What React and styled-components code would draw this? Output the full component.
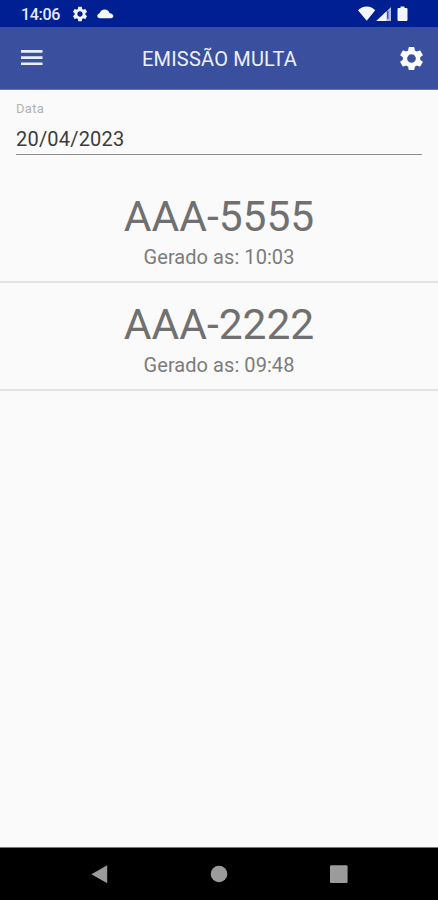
import React from 'react';
import styled, { createGlobalStyle } from 'styled-components';
import { MdSettings } from 'react-icons/md';

const GlobalStyle = createGlobalStyle`
    * {
        box-sizing: border-box;
    }

    body {
        margin: 0;
        background: #fafafa;
        font-family: Roboto, sans-serif;
    }
`

const ContainerTela = styled.div`
    display: flex;
    flex-direction: column;
    width: 438px;
    height: 900px;
    overflow: hidden;
    background: #fafafa;
`

const BarraStatus = styled.div`
    display: flex;
    justify-content: space-between;
    align-items: center;
    height: 27px;
    padding: 1px 30px 0 21px;
    background: #001f93;
    color: #f4f6ff;
`

const GrupoStatus = styled.div`
    display: flex;
    align-items: center;
`

const Hora = styled.span`
    width: 49.5px;
    padding-top: 1px;
    font-size: 16px;
    font-weight: 500;
    line-height: 20px;
    letter-spacing: -0.3px;
    color: #e6eaff;
`

const Cabecalho = styled.header`
    display: flex;
    justify-content: space-between;
    align-items: center;
    height: 62.5px;
    flex-shrink: 0;
    padding: 0 12px 0 21px;
    background: #3a509e;
    border-bottom: 1px solid #6474b4;
    color: #ffffff;
`

const Titulo = styled.h1`
    margin: 3px 6px 0 5px;
    font-size: 20px;
    font-weight: 400;
    line-height: 24px;
    letter-spacing: 0.2px;
    color: #edf1ff;
`

const BotaoIcone = styled.button`
    display: flex;
    padding: 1px 0 0;
    border: 0;
    background: none;
    color: #ffffff;
`

const CampoData = styled.label`
    display: flex;
    flex-direction: column;
    height: 65px;
    margin: 0 16px;
    padding-top: 11px;
    border-bottom: 1px solid #8c8c8c;
`

const RotuloData = styled.span`
    font-size: 13px;
    line-height: 16px;
    letter-spacing: 0.3px;
    color: #b2b2b2;
`

const ValorData = styled.span`
    margin-top: 10px;
    font-size: 20px;
    line-height: 24px;
    letter-spacing: 0.2px;
    color: #3c3c3c;
`

const ListaMultas = styled.div`
    flex: 1;
    padding-top: 20.5px;
`

const ItemMulta = styled.div`
    display: flex;
    flex-direction: column;
    align-items: center;
    height: 108px;
    padding-top: 17px;
    border-bottom: 2px solid #e4e4e4;
`

const Placa = styled.span`
    font-size: 42.5px;
    line-height: 50px;
    color: #707070;
`

const Horario = styled.span`
    margin-top: 3px;
    font-size: 20px;
    line-height: 24px;
    letter-spacing: 0.06px;
    color: #7c7c7c;
`

const BarraNavegacao = styled.nav`
    display: flex;
    align-items: center;
    justify-content: space-between;
    height: 53px;
    padding: 0 90px;
    border-top: 1px solid #777777;
    background: #000000;
`

const IconeMenu = () => (
    <svg width="22" height="18" viewBox="0 0 22 18" fill="#e9efff">
        <path d="M0 1h21.5v2.7H0zM0 7.2h21.5v2.7H0zM0 13.4h21.5v2.7H0z" />
    </svg>
)

const IconeNuvem = styled.svg`
    margin-left: 8px;
`

const multas = [
    { placa: 'AAA-5555', hora: '10:03' },
    { placa: 'AAA-2222', hora: '09:48' },
]

class EmissaoMulta extends React.Component {
    render() {
        return (
            <ContainerTela>
                <GlobalStyle />
                <BarraStatus>
                    <GrupoStatus>
                        <Hora>14:06</Hora>
                        <MdSettings size={18} />
                        <IconeNuvem width="17" height="10" viewBox="0 0 17 10" fill="currentColor">
                            <path d="M2.8 9.2C1.3 9.2.3 8.4.3 7c0-1.3.8-2.4 2.2-2.8C3.4 1.8 5.2.4 7.5.4c2.6 0 4.5 1.4 5.2 3.8 2.1.2 3.6 1.2 3.6 2.9 0 1.4-1 2.1-2.4 2.1z" />
                        </IconeNuvem>
                    </GrupoStatus>
                    <GrupoStatus>
                        <svg width="50" height="16" viewBox="0 0 50 16" fill="currentColor">
                            <path d="M0 4.3C2.2 1.8 5.3.5 8.7.5s6.4 1.3 8.5 3.8L8.7 14.8z" />
                            <path opacity=".72" d="M18.3 15L33 1v14z" />
                            <path d="M18.3 15L28.4 5.5V15z" />
                            <path d="M29.2 4.8h1.2v8h-1.2z" fill="#263ea0" />
                            <path d="M42.5.5h4V2h1.7c.8 0 1.3.5 1.3 1.3v10.4c0 .8-.5 1.3-1.3 1.3h-7.4c-.8 0-1.3-.5-1.3-1.3V3.3c0-.8.5-1.3 1.3-1.3h1.7z" />
                        </svg>
                    </GrupoStatus>
                </BarraStatus>
                <Cabecalho>
                    <BotaoIcone aria-label="Menu">
                        <IconeMenu />
                    </BotaoIcone>
                    <Titulo>EMISSÃO MULTA</Titulo>
                    <BotaoIcone aria-label="Configurações">
                        <MdSettings size={29} />
                    </BotaoIcone>
                </Cabecalho>
                <CampoData>
                    <RotuloData>Data</RotuloData>
                    <ValorData>20/04/2023</ValorData>
                </CampoData>
                <ListaMultas>
                    {multas.map((multa) => (
                        <ItemMulta key={multa.placa}>
                            <Placa>{multa.placa}</Placa>
                            <Horario>Gerado as: {multa.hora}</Horario>
                        </ItemMulta>
                    ))}
                </ListaMultas>
                <BarraNavegacao>
                    <svg width="18" height="20" viewBox="0 0 18 20" fill="#9b9b9b">
                        <path d="M1.4 10.2L17.2 1.2v18z" />
                    </svg>
                    <svg width="18" height="18" viewBox="0 0 18 18" fill="#9b9b9b">
                        <circle cx="9" cy="9" r="8.3" />
                    </svg>
                    <svg width="18" height="18" viewBox="0 0 18 18" fill="#9b9b9b">
                        <rect x="0" y="0.3" width="17.6" height="17.6" rx="1.2" />
                    </svg>
                </BarraNavegacao>
            </ContainerTela>
        )
    }
};

export default EmissaoMulta;
